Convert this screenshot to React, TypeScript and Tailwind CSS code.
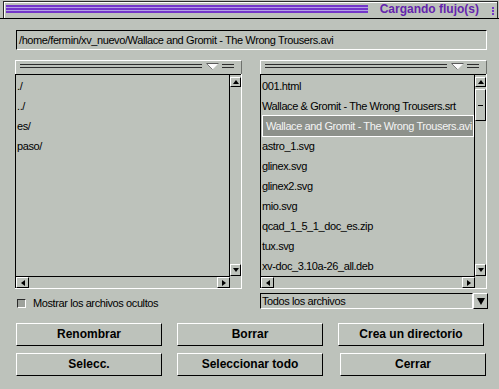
import React from "react";

const leftItems = ["./", "../", "es/", "paso/"];
const rightItems = [
  "001.html",
  "Wallace & Gromit - The Wrong Trousers.srt",
  "Wallace and Gromit - The Wrong Trousers.avi",
  "astro_1.svg",
  "glinex.svg",
  "glinex2.svg",
  "mio.svg",
  "qcad_1_5_1_doc_es.zip",
  "tux.svg",
  "xv-doc_3.10a-26_all.deb",
];

type Dir = "up" | "down" | "left" | "right";

function Tri({ dir, w, h }: { dir: Dir; w: number; h: number }) {
  let pts = "";
  if (dir === "up") pts = `${w / 2},0 ${w},${h} 0,${h}`;
  if (dir === "down") pts = `0,0 ${w},0 ${w / 2},${h}`;
  if (dir === "left") pts = `0,${h / 2} ${w},0 ${w},${h}`;
  if (dir === "right") pts = `0,0 ${w},${h / 2} 0,${h}`;
  return (
    <svg width={w} height={h} viewBox={`0 0 ${w} ${h}`} className="block">
      <polygon points={pts} fill="#000" />
    </svg>
  );
}

function ArrowBtn({ dir, className }: { dir: Dir; className: string }) {
  const vertical = dir === "up" || dir === "down";
  return (
    <div
      className={
        "flex items-center justify-center border border-t-white border-l-white border-b-black border-r-black " +
        className
      }
    >
      {vertical ? <Tri dir={dir} w={6} h={4} /> : <Tri dir={dir} w={4} h={6} />}
    </div>
  );
}

function Panel({ items, selected, thumb }: { items: string[]; selected?: number; thumb?: boolean }) {
  return (
    <div className="w-[227px] flex flex-col">
      <div className="h-[14px] border-t border-l border-r border-t-white border-l-white border-r-[#6f726d] flex items-start pt-[3px] pl-[4px] pr-[7px]">
        <div className="flex-1 h-[4px] border-t border-b border-[#2c2c2c]" />
        <svg width="13" height="7" viewBox="0 0 13 7" className="block ml-[4px] -mt-[1px]">
          <polygon points="0.5,0.5 12.5,0.5 6.5,6.5" fill="#fbfbfb" />
          <polyline points="0.5,0.5 12.5,0.5" stroke="#5a5a5a" strokeWidth="1" fill="none" />
          <polyline points="0.5,0.5 6.5,6.5" stroke="#7a7a7a" strokeWidth="1" fill="none" />
        </svg>
        <div className="ml-[3px] w-[12px] h-[4px] border-t border-b border-[#2c2c2c]" />
      </div>
      <div className="border-r border-b border-white">
        <div className="grid grid-cols-[214px_11px] grid-rows-[202px_11px] border-t border-l border-black">
          <div className="border-r border-b border-black pt-[1px] overflow-hidden">
            {items.map((it, i) =>
              i === selected ? (
                <div
                  key={it}
                  className="-my-px h-[22px] ml-[1px] border border-white bg-[#8d918b] text-[#f4f4f4] pl-[3px] flex items-center whitespace-nowrap"
                >
                  {it}
                </div>
              ) : (
                <div key={it} className="h-[20px] flex items-center pl-[1px] whitespace-nowrap">
                  {it}
                </div>
              )
            )}
          </div>
          <div className="flex flex-col pt-[2px] pb-[1px]">
            <ArrowBtn dir="up" className="h-[10px]" />
            <div className="flex-1 flex flex-col">
              {thumb && (
                <div className="mt-[2px] h-[32px] border border-t-white border-l-white border-b-black border-r-black flex items-center justify-center">
                  <div className="w-[5px] h-px bg-black" />
                </div>
              )}
            </div>
            <ArrowBtn dir="down" className="h-[12px]" />
          </div>
          <div className="flex">
            <ArrowBtn dir="left" className="w-[13px]" />
            <div className="flex-1" />
            <ArrowBtn dir="right" className="w-[13px]" />
          </div>
          <div />
        </div>
      </div>
    </div>
  );
}

function Btn({ label, extra = "" }: { label: string; extra?: string }) {
  return (
    <div
      className={
        "w-[146px] h-[23px] border border-t-white border-l-white border-b-black border-r-black flex items-center justify-center font-bold text-[12px] tracking-normal " +
        extra
      }
    >
      {label}
    </div>
  );
}

export default function App() {
  return (
    <div className="w-[499px] h-[389px] overflow-hidden bg-[#bdc2bb] text-black font-['Liberation_Sans',Arial,sans-serif] text-[11px] leading-[13px] tracking-[-0.4px]">
      {/* title bar */}
      <div className="h-[19px] border-b border-black pt-[1px] pl-[3px] pr-[1px]">
        <div className="h-[17px] border-t border-l border-r border-[#2a2a2a]">
          <div className="h-full border-t border-l border-white flex items-start pr-[3px]">
            <div className="flex-1 ml-[1px] mt-[2px] flex flex-col">
              <div className="h-[2px] bg-[#7336c9]" />
              <div className="h-px bg-[#b3a0e6]" />
              <div className="h-[2px] bg-[#7336c9]" />
              <div className="h-px bg-[#b3a0e6]" />
              <div className="h-[2px] bg-[#7336c9]" />
            </div>
            <div className="ml-[12px] font-bold text-[12px] leading-[12px] tracking-normal text-[#6424ad] whitespace-nowrap">
              Cargando flujo(s)
            </div>
            <div className="ml-[13px] mt-[4px] flex flex-col gap-px">
              <div className="w-[2px] h-[2px] bg-[#7336c9]" />
              <div className="w-[2px] h-[2px] bg-[#7336c9]" />
              <div className="w-[2px] h-[2px] bg-[#7336c9]" />
            </div>
          </div>
        </div>
      </div>

      {/* path entry */}
      <div className="pl-[16px] pt-[11px]">
        <div className="w-[471px] h-[20px] border border-t-black border-l-black border-b-white border-r-white flex items-center pl-[2px] whitespace-nowrap">
          /home/fermin/xv_nuevo/Wallace and Gromit - The Wrong Trousers.avi
        </div>
      </div>

      {/* panels */}
      <div className="flex pl-[15px] pt-[10px] gap-[18px]">
        <Panel items={leftItems} />
        <Panel items={rightItems} selected={2} thumb />
      </div>

      {/* options row */}
      <div className="flex pl-[15px] pt-[4px] gap-[18px]">
        <div className="w-[227px] h-[16px]">
          <div className="flex items-center gap-[7px] pl-[2px] mt-[5px] h-[11px]">
            <div className="w-[9px] h-[9px] border border-t-[#2a2a2a] border-l-[#2a2a2a] border-b-white border-r-white bg-[#9ea29c]" />
            <span className="whitespace-nowrap">Mostrar los archivos ocultos</span>
          </div>
        </div>
        <div className="w-[228px] h-[16px] flex">
          <div className="flex-1 border border-t-black border-l-black border-b-white border-r-white flex items-center pl-px whitespace-nowrap">
            Todos los archivos
          </div>
          <div className="w-[15px] border border-t-white border-l-white border-b-black border-r-black flex items-center justify-center">
            <Tri dir="down" w={8} h={7} />
          </div>
        </div>
      </div>

      {/* buttons */}
      <div className="flex pl-[16px] pt-[14px] gap-[15px]">
        <Btn label="Renombrar" />
        <Btn label="Borrar" />
        <Btn label="Crea un directorio" />
      </div>
      <div className="flex pl-[16px] pt-[7px] gap-[15px]">
        <Btn label="Selecc." />
        <Btn label="Seleccionar todo" />
        <Btn label="Cerrar" extra="ml-[2px]" />
      </div>
    </div>
  );
}
